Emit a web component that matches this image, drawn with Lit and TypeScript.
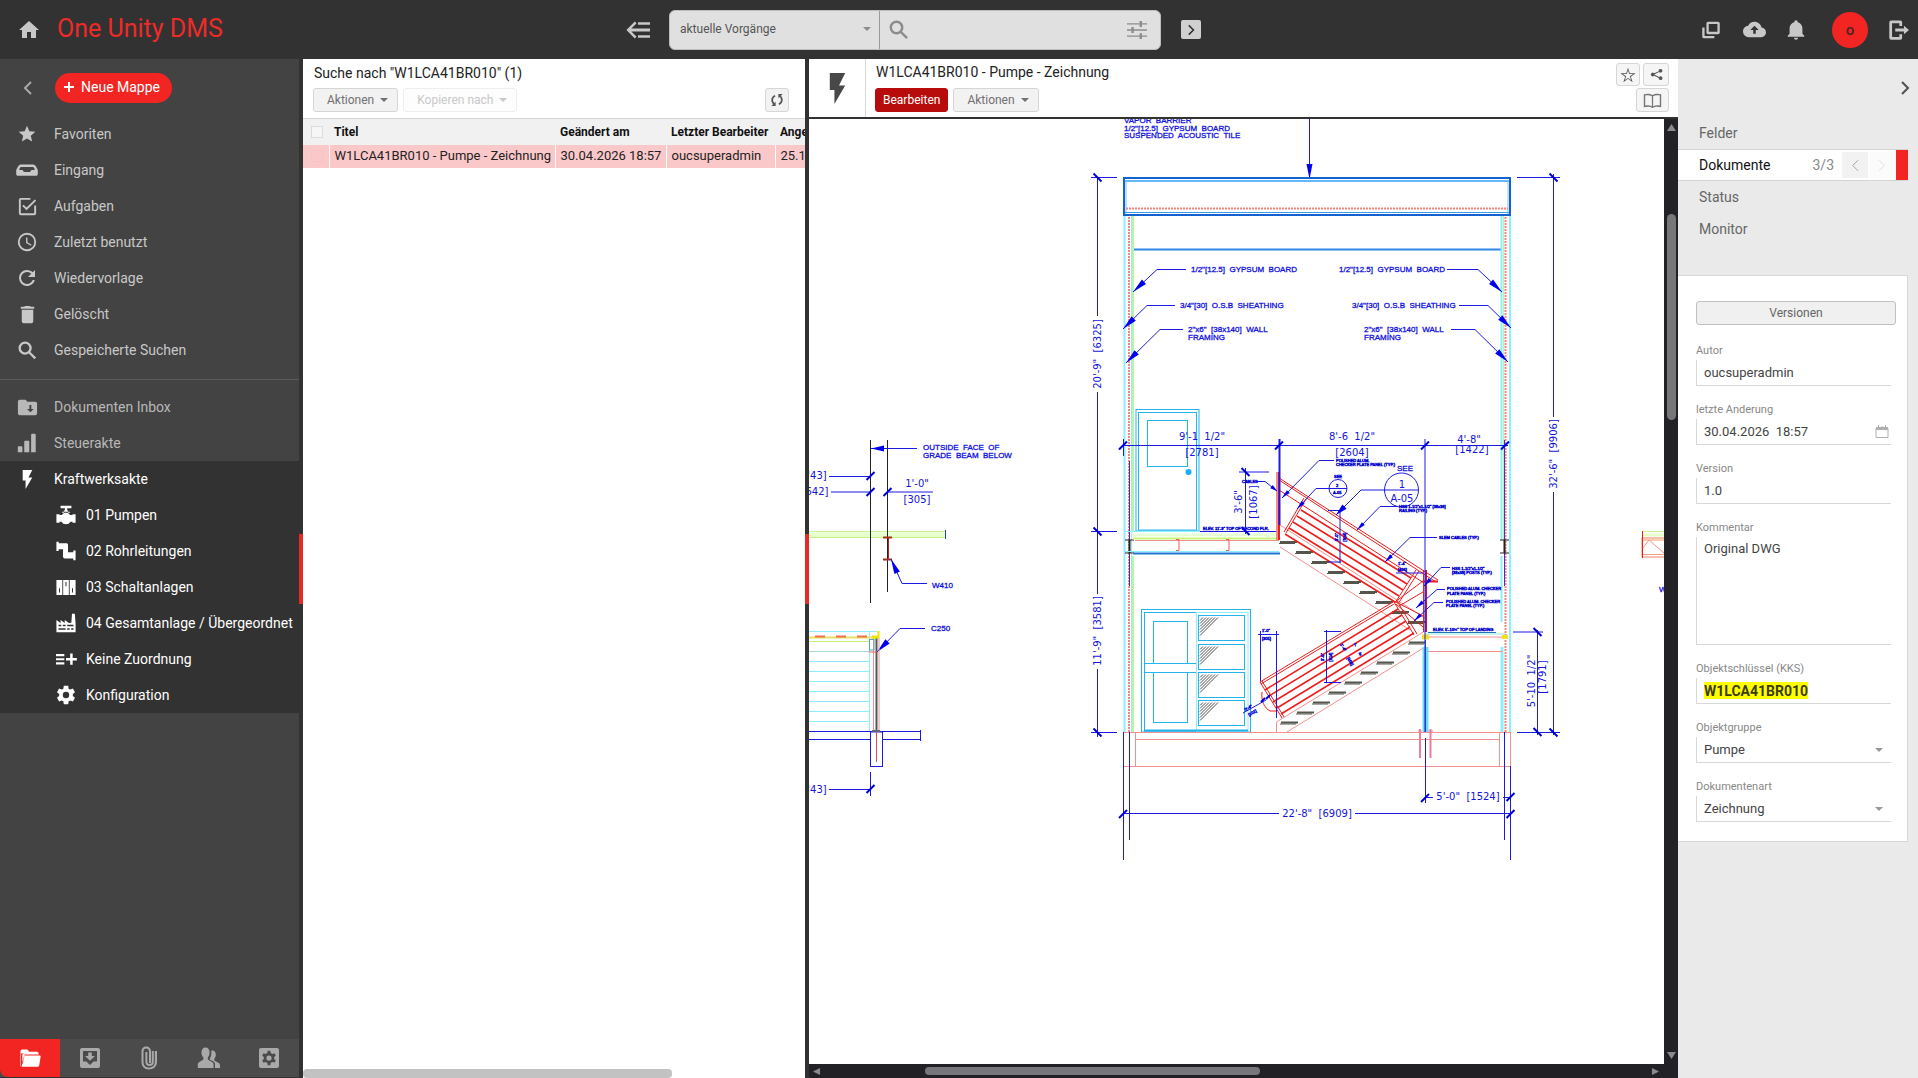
import { LitElement, html, svg, css, nothing } from "lit";
import { customElement } from "lit/decorators.js";

/* ---------- icons (24 x 24 grid) ---------- */
const ICONS: Record<string, string> = {
  home: "M10,20V14H14V20H19V12H22L12,3L2,12H5V20H10Z",
  star: "M12,17.27L18.18,21L16.54,13.97L22,9.24L14.81,8.62L12,2L9.19,8.62L2,9.24L7.45,13.97L5.82,21L12,17.27Z",
  starOutline: "M12,15.9L7.9,18.7L9.5,13.8L5.2,10.8H10.4L12,5.8L13.6,10.8H18.8L14.5,13.8L16.1,18.7L12,15.9M12,2.2L9.6,9.7H1.8L8.2,14.2L5.8,21.6L12,17.1L18.2,21.6L15.8,14.2L22.2,9.7H14.4L12,2.2Z",
  tray: "M6.5,6.5H17.5C19,6.5 20,7 21,8.5L22.8,12V16C22.8,17 22,17.8 21,17.8H3C2,17.8 1.2,17 1.2,16V12L3,8.5C4,7 5,6.5 6.5,6.5M6.4,9C5.6,9 5,9.6 4.6,10.6L4.3,12H7.4C8,12 8.2,14 9.6,14H14.4C15.8,14 16,12 16.6,12H19.7L19.4,10.6C19,9.6 18.4,9 17.6,9H6.4Z",
  task: "M19,19H5V5H15V3H5C3.89,3 3,3.89 3,5V19A2,2 0 0,0 5,21H19A2,2 0 0,0 21,19V11H19M7.91,10.08L6.5,11.5L11,16L21,6L19.59,4.58L11,13.17L7.91,10.08Z",
  clock: "M12,20A8,8 0 0,0 20,12A8,8 0 0,0 12,4A8,8 0 0,0 4,12A8,8 0 0,0 12,20M12,2A10,10 0 0,1 22,12A10,10 0 0,1 12,22C6.47,22 2,17.5 2,12A10,10 0 0,1 12,2M12.5,7V12.25L17,14.92L16.25,16.15L11,13V7H12.5Z",
  refresh: "M17.65,6.35C16.2,4.9 14.21,4 12,4A8,8 0 0,0 4,12A8,8 0 0,0 12,20C15.73,20 18.84,17.45 19.73,14H17.65C16.83,16.33 14.61,18 12,18A6,6 0 0,1 6,12A6,6 0 0,1 12,6C13.66,6 15.14,6.69 16.22,7.78L13,11H20V4L17.65,6.35Z",
  trash: "M19,4H15.5L14.5,3H9.5L8.5,4H5V6H19M6,19A2,2 0 0,0 8,21H16A2,2 0 0,0 18,19V7H6V19Z",
  search: "M9.5,2.6A6.9,6.9 0 0,1 16.4,9.5C16.4,11.1 15.9,12.5 15,13.6L21,19.2L19.2,21L13.4,15.2C12.3,16 11,16.4 9.5,16.4A6.9,6.9 0 0,1 2.6,9.5A6.9,6.9 0 0,1 9.5,2.6M9.5,5C7,5 5,7 5,9.5C5,12 7,14 9.5,14C12,14 14,12 14,9.5C14,7 12,5 9.5,5Z",
  inbox: "M10,4H4C2.89,4 2,4.89 2,6V18A2,2 0 0,0 4,20H20A2,2 0 0,0 22,18V8C22,6.89 21.1,6 20,6H12L10,4M14,9.5H16V13.5H18.5L15,17L11.5,13.5H14V9.5Z",
  bars: "M2,16.5A1,1 0 0,1 3,15.5H6A1,1 0 0,1 7,16.5V22H2V16.5M9,10.5A1,1 0 0,1 10,9.5H13.5A1,1 0 0,1 14.5,10.5V22H9V10.5M16.5,3A1,1 0 0,1 17.5,2H20.5A1,1 0 0,1 21.5,3V22H16.5V3Z",
  flash: "M7,2V13H10V22L17,10H13L17,2H7Z",
  valve: "M5.5,1H18.5V4H13.4V6.5H14.5V9.5L17,12H19.8V11.2H23.5V21.4H19.8V20.2H17.4C16.2,22.2 14.3,23.2 12,23.2C9.7,23.2 7.8,22.2 6.6,20.2H4.2V21.4H0.5V11.2H4.2V12H7L9.5,9.5V6.5H10.6V4H5.5V1M7.4,8H16.6V9.4H7.4Z",
  pipe: "M0.5,1H3.2V2.6H12.2C13.6,2.6 14.4,3.4 14.4,4.8V13.6H20.8V11.4H23.5V23H20.8V20.9H10.6C9.2,20.9 8.4,20.1 8.4,18.7V9.8H3.2V12H0.5V1Z",
  cabinet: "M0.5,3.5H7.6V21.5H0.5V3.5M8.6,3.5H15.4V21.5H8.6V3.5M16.4,3.5H23.5V21.5H16.4V3.5M3.6,13.5V18.5H4.8V13.5H3.6M11.4,6V11H12.6V6H11.4M19.2,13.5V18.5H20.4V13.5H19.2Z",
  factory: "M0.5,8.5L5.5,12V8.5L10.5,12V8.5L15.5,12L18.4,11.6L19.2,1H22.6L23.5,13V23H0.5V8.5M3,14.2V16H6.4V14.2H3M8.2,14.2V16H11.6V14.2H8.2M13.4,14.2V16H21V14.2H13.4M3,18.4V20.2H11.6V18.4H3M13.4,18.4V20.2H16.4V18.4H13.4M18.2,18.4V20.2H21V18.4H18.2Z",
  listPlus: "M0,6H10V8.6H0V6M0,11H10V13.6H0V11M0,16H10V18.6H0V16M17,5.5H20V10.7H25V13.7H20V19H17V13.7H12V10.7H17V5.5Z",
  gear: "M12,15.5A3.5,3.5 0 0,1 8.5,12A3.5,3.5 0 0,1 12,8.5A3.5,3.5 0 0,1 15.5,12A3.5,3.5 0 0,1 12,15.5M19.43,12.97C19.47,12.65 19.5,12.33 19.5,12C19.5,11.67 19.47,11.34 19.43,11L21.54,9.37C21.73,9.22 21.78,8.95 21.66,8.73L19.66,5.27C19.54,5.05 19.27,4.96 19.05,5.05L16.56,6.05C16.04,5.66 15.5,5.32 14.87,5.07L14.5,2.42C14.46,2.18 14.25,2 14,2H10C9.75,2 9.54,2.18 9.5,2.42L9.13,5.07C8.5,5.32 7.96,5.66 7.44,6.05L4.95,5.05C4.73,4.96 4.46,5.05 4.34,5.27L2.34,8.73C2.21,8.95 2.27,9.22 2.46,9.37L4.57,11C4.53,11.34 4.5,11.67 4.5,12C4.5,12.33 4.53,12.65 4.57,12.97L2.46,14.63C2.27,14.78 2.21,15.05 2.34,15.27L4.34,18.73C4.46,18.95 4.73,19.03 4.95,18.95L7.44,17.94C7.96,18.34 8.5,18.68 9.13,18.93L9.5,21.58C9.54,21.82 9.75,22 10,22H14C14.25,22 14.46,21.82 14.5,21.58L14.87,18.93C15.5,18.67 16.04,18.34 16.56,17.94L19.05,18.95C19.27,19.03 19.54,18.95 19.66,18.73L21.66,15.27C21.78,15.05 21.73,14.78 21.54,14.63L19.43,12.97Z",
  collapse: "M8.8,3.4L10.6,5.2L5.4,10.6H24V13.4H5.4L10.6,18.8L8.8,20.6L0.4,12L8.8,3.4M12,4.2H24V6.8H12V4.2M12,17.2H24V19.8H12V17.2Z",
  tune: "M2,5.2H14.6V3H17V5.2H22V6.6H17V9H14.6V6.6H2V5.2M2,11.3H6.4V9H8.8V11.3H22V12.7H8.8V15H6.4V12.7H2V11.3M2,17.4H14.6V15.2H17V17.4H22V18.8H17V21H14.6V18.8H2V17.4Z",
  windows: "M8.5,2H20.5A2,2 0 0,1 22.5,4V15A2,2 0 0,1 20.5,17H8.5A2,2 0 0,1 6.5,15V4A2,2 0 0,1 8.5,2M9.3,4.8V14.2H19.7V4.8H9.3M1.5,9H4.3V19.2H16V22H3.5A2,2 0 0,1 1.5,20V9Z",
  cloud: "M19.35,10.03C18.67,6.59 15.64,4 12,4C9.11,4 6.6,5.64 5.35,8.03C2.34,8.36 0,10.9 0,14A6,6 0 0,0 6,20H19A5,5 0 0,0 24,15C24,12.36 21.95,10.22 19.35,10.03M13.3,12.6V16.4H10.7V12.6H7.6L12,8.2L16.4,12.6H13.3Z",
  bell: "M21,18.2V19.4H3V18.2L5,16.2V10.2C5,7 7.1,4.4 10.1,3.6V3.2A1.9,1.9 0 0,1 13.9,3.2V3.6C16.9,4.4 19,7 19,10.2V16.2L21,18.2M14.2,20.4A2.2,2.2 0 0,1 9.8,20.4",
  exit: "M4.5,1.5H14.5A2,2 0 0,1 16.5,3.5V7.5H13.5V4.5H5.5V19.5H13.5V16.5H16.5V20.5A2,2 0 0,1 14.5,22.5H4.5A2,2 0 0,1 2.5,20.5V3.5A2,2 0 0,1 4.5,1.5M9,10.4H18.5V7.4L24,12L18.5,16.6V13.6H9V10.4Z",
  share: "M18.5,3A3,3 0 1,1 16.2,8L9,11.5V12.5L16.2,16A3,3 0 1,1 15.6,17.4L8.2,13.9A3,3 0 1,1 8.2,10.1L15.6,6.6A3,3 0 0,1 18.5,3Z",
  book: "M1,4C5,3 9,3 12,5.2C15,3 19,3 23,4V20.5C19,19.5 15,19.5 12,21.5C9,19.5 5,19.5 1,20.5V4M2.8,5.6V18.4C6,17.8 8.6,17.9 11.2,19.2V6.6C8.6,5 6,5 2.8,5.6M21.2,5.6C18,5 15.4,5 12.8,6.6V19.2C15.4,17.9 18,17.8 21.2,18.4V5.6Z",
  sync: "M9,5.4L10,7.4C8,8.2 6.8,10 6.8,12C6.8,13.6 7.4,14.9 8.6,15.9L10.2,14.3V20H4.4L6.8,17.7C5.3,16.2 4.4,14.2 4.4,12C4.4,9 6.3,6.4 9,5.4M15,18.6L14,16.6C16,15.8 17.2,14 17.2,12C17.2,10.4 16.6,9.1 15.4,8.1L13.8,9.7V4H19.6L17.2,6.3C18.7,7.8 19.6,9.8 19.6,12C19.6,15 17.7,17.6 15,18.6Z",
  folder: "M4,3.5H9.5L11.3,5.8H19A1.6,1.6 0 0,1 20.6,7.4V8.6H6.6L4.6,18.5L4.2,10C4.2,8.2 4.8,7.4 6.4,7.4H3V19.5A1,1 0 0,0 3.4,20.4L2.5,20.2V5A1.5,1.5 0 0,1 4,3.5M7.6,9.6H21.6A1,1 0 0,1 22.6,10.8L21.2,19.4A1.6,1.6 0 0,1 19.6,20.8H3.6L5.8,10.8C6,10 6.6,9.6 7.6,9.6Z",
  boxDown: "M4,2H20A2,2 0 0,1 22,4V20A2,2 0 0,1 20,22H4A2,2 0 0,1 2,20V4A2,2 0 0,1 4,2M5,5V15.5H8.4L12,19L15.6,15.5H19V5H5M10.2,6.5H13.8V10H17L12,14.8L7,10H10.2V6.5Z",
  clip: "M12,23.5C7.5,23.5 4.5,20.5 4.5,16V5.5C4.5,2.5 6.5,0.5 9.2,0.5C12,0.5 14,2.5 14,5.5V17H12V5.6C12,3.6 10.8,2.5 9.2,2.5C7.6,2.5 6.5,3.6 6.5,5.6V16C6.5,19.4 8.6,21.5 12,21.5C15.4,21.5 17.8,19.4 17.8,16V5H20V16C20,20.5 16.5,23.5 12,23.5M12.6,20C10,20 8.4,18.4 8.4,16V6H10.4V16C10.4,17.3 11.4,18 12.6,18C13.8,18 14.8,17.3 14.8,16V5H16.8V16C16.8,18.4 15.2,20 12.6,20Z",
  people: "M8.5,1.5C11.2,1.5 12.6,3.6 12.6,6.4C12.6,8.6 11.9,10.3 10.8,11.4V13.6L15.4,16.2C16.2,16.8 16.6,17.6 16.6,18.8V22H0.8V18.8C0.8,17.6 1.2,16.8 2,16.2L6.4,13.6V11.4C5.2,10.3 4.5,8.6 4.5,6.4C4.5,3.6 5.8,1.5 8.5,1.5M15.2,4.5C17.6,4.5 18.8,6.2 18.8,8.6C18.8,10.4 18.2,11.8 17.3,12.7V14.6L21.8,17C22.6,17.5 23,18.3 23,19.4V22H18V18.6C18,17 17.3,15.9 16,15.2L12.8,13.4V12.2C13.8,11 14.4,9.4 14.4,6.4C14.4,5.7 14.3,5.1 14.1,4.6Z",
  boxGear:
    "M4,2H20A2,2 0 0,1 22,4V20A2,2 0 0,1 20,22H4A2,2 0 0,1 2,20V4A2,2 0 0,1 4,2M10.7,4.8L10.3,6.9L8.6,7.9L6.6,7.2L5.2,9.5L6.8,10.9V13.1L5.2,14.5L6.6,16.8L8.6,16.1L10.3,17.1L10.7,19.2H13.3L13.7,17.1L15.4,16.1L17.4,16.8L18.8,14.5L17.2,13.1V10.9L18.8,9.5L17.4,7.2L15.4,7.9L13.7,6.9L13.3,4.8H10.7M12,9.4A2.6,2.6 0 1,1 12,14.6A2.6,2.6 0 1,1 12,9.4Z",
};

const icon = (name: string, size = 24) => html`<svg
  class="icon" width=${size} height=${size} viewBox="0 0 24 24" fill="currentColor" aria-hidden="true"
><path fill-rule="evenodd" d=${ICONS[name]}></path></svg>`;

const chevron = (dir: "left" | "right", w = 9, stroke = 2) => html`<svg
  class="icon" width=${w} height=${w + 5} viewBox="0 0 9 14" fill="none" stroke="currentColor" stroke-width=${stroke} aria-hidden="true"
><path d=${dir === "left" ? "M8,1L2,7L8,13" : "M1,1L7,7L1,13"}></path></svg>`;

const reset = css`
  :host, *, *::before, *::after { box-sizing: border-box; }
  button, input, select, textarea { font: inherit; color: inherit; margin: 0; padding: 0; border: 0; background: none; outline: 0; }
  button { display: flex; align-items: center; justify-content: center; cursor: pointer; }
  a { color: inherit; text-decoration: none; }
  h1, h2, ul { margin: 0; padding: 0; font-size: inherit; font-weight: 400; }
  ul { list-style: none; }
  .icon { display: block; flex: none; overflow: visible; }
  .caret { width: 0; height: 0; border: 4px solid transparent; border-top-color: currentColor; border-bottom: 0; }
`;

/* ---------- technical drawing ---------- */
type Pt = [number, number];
const B = "#1c1ce0";

const ln = (x1: number, y1: number, x2: number, y2: number, c = B, w = 1) =>
  svg`<line x1=${x1} y1=${y1} x2=${x2} y2=${y2} stroke=${c} stroke-width=${w}></line>`;
const dots = (x1: number, y1: number, x2: number, y2: number) =>
  svg`<line x1=${x1} y1=${y1} x2=${x2} y2=${y2} stroke="#f4857c" stroke-width="2" stroke-dasharray="2 1"></line>`;
const box = (x1: number, y1: number, x2: number, y2: number, c: string, w = 1) =>
  svg`<rect x=${x1} y=${y1} width=${x2 - x1} height=${y2 - y1} fill="none" stroke=${c} stroke-width=${w}></rect>`;
const leader = (pts: Pt[], len = 15, half = 3) => {
  const [px, py] = pts[pts.length - 2];
  const [x, y] = pts[pts.length - 1];
  const d = Math.hypot(x - px, y - py);
  const ux = (x - px) / d;
  const uy = (y - py) / d;
  const bx = x - ux * len;
  const by = y - uy * len;
  const head = `${x},${y} ${bx - uy * half},${by + ux * half} ${bx + uy * half},${by - ux * half}`;
  return svg`<polyline points=${pts.map((p) => p.join(",")).join(" ")} fill="none" stroke=${B}></polyline>
    <polygon points=${head} fill="#0000f0"></polygon>`;
};
const tickH = (x: number, y: number, r = 4) => ln(x - r, y + r, x + r, y - r, "#0000d8", 2);
const tickV = (x: number, y: number, r = 4) => ln(x - r, y - r, x + r, y + r, "#0000d8", 2);
const note = (x: number, y: number, s: string) => svg`<text class="note" x=${x} y=${y}>${s}</text>`;
const tiny = (x: number, y: number, s: string) => svg`<text class="tiny" x=${x} y=${y}>${s}</text>`;
const dim = (x: number, y: number, s: string) => svg`<text class="dim" x=${x} y=${y} text-anchor="middle">${s}</text>`;
const dimV = (x: number, y: number, s: string) =>
  svg`<text class="dim" text-anchor="middle" transform=${`translate(${x} ${y}) rotate(-90)`}>${s}</text>`;
const tinyV = (x: number, y: number, s: string, a = -90) =>
  svg`<text class="tiny" text-anchor="middle" transform=${`translate(${x} ${y}) rotate(${a})`}>${s}</text>`;
const range = (n: number) => Array.from({ length: n }, (_, i) => i);

const CY = "#8ceeff";
const GR = "#b8f5a8";
const SKY = "#22b4ea";
const SAL = "#f59090";
const RED = "#ee1c1c";
const TREAD = "#55554c";

@customElement("cad-drawing")
export class CadDrawing extends LitElement {
  static styles = css`
    :host { display: block; min-width: 0; min-height: 0; background: #fff; overflow: hidden; }
    .sheet { display: block; width: 100%; height: 100%; }
    .note { font: 8px "Liberation Sans", sans-serif; fill: #1010e0; stroke: #1010e0; stroke-width: 0.3; white-space: pre; }
    .dim { font: 10px "DejaVu Sans", sans-serif; fill: #1414dc; white-space: pre; }
    .tiny { font: 4px "Liberation Sans", sans-serif; fill: #0000d0; stroke: #0000d0; stroke-width: 0.5; }
  `;

  private roof() {
    return svg`
      ${note(1124, 123, "VAPOR  BARRIER")}${note(1124, 131, '1/2"[12.5]  GYPSUM  BOARD')}${note(1124, 138, "SUSPENDED  ACOUSTIC  TILE")}
      ${leader([[1309.5, 112], [1309.5, 179]])}
      ${box(1124, 178, 1510, 215, "#1262d0", 2)}${ln(1125, 181, 1509, 181, "#62b8f8", 2)}
      ${ln(1126, 180, 1126, 214, "#7cc4ff")}${ln(1508, 180, 1508, 214, "#7cc4ff")}
      ${dots(1126, 208.5, 1508, 208.5)}${ln(1125, 212.5, 1509, 212.5, "#3aa0e8")}
      ${ln(1133, 249.5, 1501, 249.5, "#2f86ea", 2)}`;
  }

  private walls() {
    return svg`
      ${ln(1124.5, 216, 1124.5, 732, CY, 2)}${ln(1133, 216, 1133, 531, GR, 2)}${ln(1131.5, 216, 1131.5, 732, CY)}${ln(1133, 556, 1133, 732, GR, 2)}
      ${dots(1129, 217, 1129, 732)}
      ${ln(1501.5, 216, 1501.5, 540, CY, 2)}${ln(1510, 216, 1510, 732, CY, 2)}${ln(1503.5, 216, 1503.5, 540, GR)}
      ${dots(1505.5, 217, 1505.5, 732)}${ln(1501.5, 556, 1501.5, 622, CY, 2)}${ln(1502, 647, 1502, 732, CY, 3)}
      ${ln(1129.5, 461, 1129.5, 586, "#5a20c0")}${ln(1504.5, 440, 1504.5, 586, "#5a20c0")}
      ${ln(1129.5, 540, 1129.5, 553, "#222", 2)}${ln(1125, 540, 1134, 540, "#222")}${ln(1125, 553, 1134, 553, "#222")}
      ${ln(1504.5, 540, 1504.5, 553, "#222", 2)}${ln(1500, 540, 1509, 540, "#222")}${ln(1500, 553, 1509, 553, "#222")}
      ${leader([[1186, 269.5], [1157, 269.5], [1133, 292]])}${note(1191, 272, '1/2"[12.5]  GYPSUM  BOARD')}
      ${leader([[1175, 305.5], [1147, 305.5], [1123, 329]])}${note(1180, 308, '3/4"[30]  O.S.B  SHEATHING')}
      ${leader([[1183, 329.5], [1160, 329.5], [1126, 363]])}${note(1188, 332, '2"x6"  [38x140]  WALL')}${note(1188, 340, "FRAMING")}
      ${leader([[1447, 269.5], [1478, 269.5], [1502, 292]])}${note(1339, 272, '1/2"[12.5]  GYPSUM  BOARD')}
      ${leader([[1459, 305.5], [1488, 305.5], [1511, 328]])}${note(1352, 308, '3/4"[30]  O.S.B  SHEATHING')}
      ${leader([[1451, 329.5], [1475, 329.5], [1508, 362]])}${note(1364, 332, '2"x6"  [38x140]  WALL')}${note(1364, 340, "FRAMING")}`;
  }

  private dimensions() {
    return svg`
      ${ln(1097.5, 177, 1097.5, 316)}${dimV(1101, 354, "20'-9\"  [6325]")}${ln(1097.5, 392, 1097.5, 594)}
      ${dimV(1101, 631, "11'-9\"  [3581]")}${ln(1097.5, 669, 1097.5, 737)}
      ${[177.5, 531.5, 732.5].map((y) => svg`${ln(1091, y, 1117, y)}${tickV(1097.5, y)}`)}
      ${ln(1553.5, 174, 1553.5, 417)}${dimV(1557, 454, "32'-6\"  [9906]")}${ln(1553.5, 492, 1553.5, 735)}
      ${[177.5, 732.5].map((y) => svg`${ln(1517, y, 1560, y)}${tickV(1553.5, y)}`)}
      ${ln(1513, 632, 1543, 632)}${ln(1537.5, 630, 1537.5, 735)}${tickV(1537.5, 632)}${tickV(1537.5, 732)}
      ${dimV(1535, 681, "5'-10  1/2\"")}${dimV(1546, 677, "[1791]")}
      ${ln(1122, 445.5, 1508, 445.5)}${ln(1123.5, 439, 1123.5, 456)}${ln(1279.5, 439, 1279.5, 525, B, 2)}
      ${ln(1425, 439, 1425, 732, B, 1)}${[1123, 1279, 1425, 1505].map((x) => tickH(x, 445.5))}
      ${dim(1202, 440, "9'-1  1/2\"")}${dim(1202, 456, "[2781]")}${dim(1352, 440, "8'-6  1/2\"")}${dim(1352, 456, "[2604]")}
      ${dim(1469, 443, "4'-8\"")}${dim(1472, 453, "[1422]")}
      ${ln(1245.5, 468, 1245.5, 534)}${ln(1239, 472, 1269, 472)}${tickV(1245.5, 472)}${tickV(1245.5, 531)}
      ${dimV(1242, 502, "3'-6\"")}${dimV(1257, 502, "[1067]")}
      ${ln(1123.5, 732, 1123.5, 860, B, 1)}${ln(1129.5, 732, 1129.5, 840)}${ln(1504.5, 732, 1504.5, 840)}${ln(1510.5, 766, 1510.5, 860)}
      ${ln(1123, 813.5, 1279, 813.5)}${dim(1317, 817, "22'-8\"  [6909]")}${ln(1355, 813.5, 1511, 813.5)}${tickH(1123, 814)}${tickH(1510.5, 814)}
      ${ln(1425.5, 738, 1425.5, 803)}${ln(1425, 797.5, 1433, 797.5)}${dim(1468, 800, "5'-0\"  [1524]")}${ln(1503, 797.5, 1511, 797.5)}
      ${tickH(1425, 798)}${tickH(1510.5, 797)}`;
  }

  private upperFloor() {
    return svg`
      ${box(1136, 409.5, 1199, 531, SKY)}${box(1138.5, 412.5, 1196.5, 530, SKY)}${box(1147.5, 420.5, 1187.5, 466.5, SKY)}
      <circle cx="1188.5" cy="472" r="3" fill="#16b0f4"></circle>
      ${ln(1125, 531.5, 1277, 531.5, CY)}${ln(1133, 535, 1277, 535, "#e6ffd4", 3)}${ln(1133, 538.5, 1277, 538.5, "#c8f77a", 2)}
      ${ln(1135, 540.5, 1279, 540.5, SAL)}${ln(1133, 553.5, 1280, 553.5, "#1f74d8", 2)}${ln(1125, 551.5, 1279, 551.5, CY)}
      ${[1176, 1226].map((x) => svg`<path d=${`M${x},539.5h3v11h-3`} fill="none" stroke="#f05858"></path>`)}
      ${ln(1200, 531.5, 1276, 531.5)}${tiny(1203, 530, "ELEV. 11'-9\" TOP OF SECOND FLR.")}`;
  }

  private cabinet() {
    return svg`
      ${box(1141.5, 609.5, 1250.5, 732, SKY)}${box(1144.5, 612.5, 1196.5, 732, SKY)}${box(1196.5, 612.5, 1248, 732, CY)}
      ${box(1153.5, 621.5, 1187.5, 663.5, SKY)}${ln(1144, 663.5, 1196, 663.5, SKY)}${ln(1144, 672.5, 1196, 672.5, SKY)}
      ${box(1153.5, 672.5, 1187.5, 722.5, SKY)}${ln(1145, 730.5, 1248, 730.5, SKY, 2)}
      ${[615.5, 644.5, 672.5, 700.5].map(
        (y) => svg`${box(1198.5, y, 1244.5, y + 25, SKY)}${range(6).map((i) => {
          const k = 3 + i * 3;
          return ln(1200, y + 2 + k, 1200 + k, y + 2, "#222", 0.8);
        })}`
      )}`;
  }

  private stairs() {
    return svg`
      ${ln(1280, 525, 1425, 618, SAL)}${ln(1280, 547, 1410, 630, SAL)}
      ${ln(1276.5, 722, 1425, 631, SAL)}${ln(1287, 732, 1425, 647, SAL)}${ln(1276.5, 722, 1276.5, 732, SAL)}
      ${range(9).map((i) => svg`${ln(1280 + i * 16, 542 + i * 10, 1297 + i * 16, 542 + i * 10, TREAD, 2)}${ln(1279 + i * 16, 543.5 + i * 10, 1295 + i * 16, 543.5 + i * 10, TREAD)}`)}
      ${range(9).map((i) => svg`${ln(1281 + i * 16, 722.5 - i * 10, 1298 + i * 16, 722.5 - i * 10, TREAD, 2)}${ln(1280 + i * 16, 724 - i * 10, 1296 + i * 16, 724 - i * 10, TREAD)}`)}
      ${ln(1277, 472, 1277, 540, RED)}${ln(1279, 472, 1279, 540, RED, 2)}
      ${ln(1279, 478, 1438, 580, RED)}${ln(1279, 480, 1436, 582, RED, 1)}${ln(1279, 490, 1424, 583, RED, 1)}
      ${ln(1423, 581.5, 1438, 581.5, RED, 2)}
      ${range(5).map((i) => ln(1301 - i * 4, 510 + i * 6, 1411 - i * 4, 578 + i * 6, RED, 1.5))}
      ${ln(1284, 532, 1304, 498, RED)}${ln(1286, 533, 1306, 499, RED)}${ln(1416, 570, 1395, 603, RED)}${ln(1419, 571, 1398, 604, RED)}
      ${ln(1395, 602, 1423, 581, RED)}${ln(1399, 606, 1423, 592, RED)}${ln(1396, 602, 1423, 616, RED)}${ln(1396, 604, 1423, 627, RED)}
      ${ln(1423.5, 570, 1423.5, 632, RED)}${ln(1426, 570, 1426, 632, "#b01850", 2)}
      ${ln(1260, 682, 1393, 602, RED)}${ln(1261, 684, 1394, 604, RED)}
      ${range(5).map((i) => ln(1265 + i * 4, 690 + i * 6, 1398 + i * 4, 609 + i * 6, RED, 1.5))}
      ${ln(1260, 682, 1282, 718, RED)}${ln(1262, 681, 1284, 717, RED)}${ln(1394, 602, 1414, 635, RED)}${ln(1397, 601, 1417, 634, RED)}
      <path d="M1262,692c-1,8 2,16 8,19h6" fill="none" stroke=${RED}></path>
      ${ln(1428, 632.5, 1496, 632.5, "#1f74b8")}${ln(1425, 634, 1505, 634, "#8fe8e8")}${ln(1425, 637, 1507, 637, SAL)}${ln(1428, 651.5, 1503, 651.5, SAL)}
      ${ln(1422, 637, 1429, 637, "#f0e020", 5)}${ln(1502, 637, 1508, 637, "#f0e020", 4)}
      ${ln(1425.5, 647, 1425.5, 732, "#6fdcf4", 6)}${ln(1425.5, 640, 1425.5, 732, "#2060c8")}
      ${tiny(1433, 631, "ELEV. 5'-10½\" TOP OF LANDING")}
      ${ln(1260.5, 631, 1260.5, 681)}${ln(1276.5, 631, 1276.5, 718)}${ln(1258, 634.5, 1279, 634.5)}${tiny(1262, 632, "1'-0\"")}${tiny(1262, 640, "[305]")}
      ${ln(1326.5, 630, 1326.5, 683)}${ln(1324, 631.5, 1341, 631.5)}${ln(1324, 682.5, 1341, 682.5)}${tinyV(1324, 657, "3'-0\"")}${tinyV(1332, 657, "[914]")}
      ${ln(1340, 510, 1340, 563)}${ln(1328, 510.5, 1343, 510.5)}${ln(1328, 562, 1341, 562)}${tinyV(1338, 537, "3'-0\"")}${tinyV(1346, 537, "[914]")}
      ${tinyV(1342, 648, "1'-4\"", 60)}${tinyV(1349, 662, "[406]", 60)}${tinyV(1356, 646, "7'", -30)}${tinyV(1361, 655, "8'", -30)}
      ${tiny(1398, 565, "1'-4\"")}${tiny(1398, 571, "[406]")}${ln(1396, 573, 1423, 573)}
      ${tinyV(1249, 709, "0'-4\"", -30)}${tinyV(1253, 714, "[102]", -30)}${ln(1243, 713, 1266, 700)}${tickH(1268, 697, 2)}${tickH(1263, 700, 2)}`;
  }

  private callouts() {
    return svg`
      ${leader([[1334, 460.5], [1319, 460.5], [1282, 498]], 9, 2)}${tiny(1336, 462, "POLISHED ALUM.")}${tiny(1336, 466, "CHECKER PLATE PANEL (TYP.)")}
      ${tiny(1242, 483, "CABLES")}${leader([[1257, 481.5], [1265, 481.5], [1277, 491]], 7, 2)}
      ${leader([[1329, 488.5], [1316, 488.5], [1297, 509]], 9, 2)}
      <circle cx="1338" cy="488.5" r="9" fill="none" stroke=${B}></circle>${ln(1329, 488.5, 1347, 488.5)}
      ${tiny(1334, 478, "SEE")}${tiny(1336, 487, "2")}${tiny(1333, 494, "A-05")}
      ${leader([[1384, 490], [1361, 490], [1336, 515]], 12, 3)}
      <circle cx="1401.5" cy="490" r="17" fill="none" stroke=${B}></circle>${ln(1384, 490, 1419, 490)}
      ${note(1397, 471, "SEE")}${dim(1402, 488, "1")}${dim(1402, 502, "A-05")}
      ${leader([[1398, 506.5], [1380, 506.5], [1357, 530]], 9, 2)}${tiny(1399, 508, "HSS 1-1/2\"x1-1/2\" [38x38]")}${tiny(1399, 512, "RAILING (TYP.)")}
      ${leader([[1437, 537.5], [1410, 537.5], [1385, 562]], 9, 2)}${tiny(1439, 539, "SLEM CABLES (TYP.)")}
      ${leader([[1450, 567.5], [1441, 567.5], [1424, 586]], 9, 2)}${tiny(1452, 570, "HSS 1-1/2\"x1-1/2\"")}${tiny(1452, 574, "[38x38] POSTS (TYP.)")}
      ${leader([[1445, 589.5], [1437, 589.5], [1416, 608]], 9, 2)}${tiny(1447, 590, "POLISHED ALUM. CHECKER")}${tiny(1447, 595, "PLATE PANEL (TYP.)")}
      ${leader([[1443, 602.5], [1434, 602.5], [1414, 621]], 9, 2)}${tiny(1446, 603, "POLISHED ALUM. CHECKER")}${tiny(1446, 607, "PLATE PANEL (TYP.)")}`;
  }

  private foundation() {
    return svg`
      ${box(1123.5, 732.5, 1510.5, 766.5, SAL)}${ln(1135, 739.5, 1499, 739.5, SAL)}${ln(1135.5, 732, 1135.5, 766, SAL)}${ln(1499.5, 732, 1499.5, 766, SAL)}
      ${ln(1420, 729, 1420, 758, "#e87ea0", 2)}${ln(1430.5, 729, 1430.5, 758, "#e87ea0", 2)}${ln(1418, 731, 1422, 731, "#e87ea0")}${ln(1428, 731, 1433, 731, "#e87ea0")}`;
  }

  private leftDetail() {
    return svg`
      ${ln(809, 535, 946, 535, "#e6ffcc", 5)}${ln(809, 531.5, 946, 531.5, "#c6f58a")}${ln(809, 537.5, 946, 537.5, "#c6f58a")}${ln(945.5, 530, 945.5, 539, "#2848a0")}
      ${ln(870.5, 440, 870.5, 603, "#222")}${ln(887.5, 440, 887.5, 592, "#222")}
      ${leader([[917, 448.5], [871, 448.5]], 13, 3)}${note(923, 450, "OUTSIDE  FACE  OF")}${note(923, 458, "GRADE  BEAM  BELOW")}
      ${dim(817, 479, "'43]")}${ln(829, 476.5, 870, 476.5)}${tickH(870.5, 476)}
      ${dim(817, 495, "642]")}${ln(831, 492, 870, 492)}${tickH(870.5, 492)}${tickH(887.5, 492)}${ln(887, 492, 933, 492)}
      ${dim(917, 487, "1'-0\"")}${dim(917, 503, "[305]")}
      ${ln(883, 537.5, 892, 537.5, "#a03018", 2)}${ln(883, 559.5, 892, 559.5, "#a03018", 2)}${ln(888.5, 538, 888.5, 560, "#a03018")}
      ${leader([[927, 583.5], [902, 583.5], [891, 559]])}${note(932, 588, "W410")}
      ${leader([[925, 628.5], [900, 628.5], [877, 652]])}${note(931, 631, "C250")}
      ${ln(809, 631.5, 877, 631.5, CY)}${ln(869.5, 632, 869.5, 731, CY)}
      ${ln(809, 637.5, 876, 637.5, "#e8e060", 2)}${[815, 836, 857].map((x) => ln(x, 636.5, x + 10, 636.5, "#f07050", 2))}
      ${ln(809, 641.5, 869, 641.5, "#c6ee7a")}${ln(809, 651.5, 869, 651.5, "#a8d8d8")}
      ${[661.5, 671.5, 681.5, 691.5, 701.5, 711.5, 721.5].map((y) => ln(809, y, 869, y, CY))}
      ${ln(873.5, 638, 873.5, 731, SAL)}${ln(876.5, 638, 876.5, 731, "#555", 2)}${ln(879, 638, 879, 731, "#d99")}
      ${box(869.5, 639.5, 874, 650, "#50a8b0")}${ln(869, 652, 877, 652, "#e86060")}
      ${ln(872, 637, 879, 637, "#f0e400", 3)}${ln(878.5, 631, 878.5, 638, "#f0e400", 2)}
      ${ln(809, 731.5, 921, 731.5)}${ln(809, 739.5, 921, 739.5)}${ln(920.5, 730, 920.5, 741)}
      <rect x="870.5" y="732" width="12" height="34.5" fill="#fff" stroke=${B}></rect>
      ${ln(876.5, 732, 876.5, 762, "#d05060")}${ln(872, 731, 880, 731, "#667", 2)}
      ${ln(870.5, 772, 870.5, 796)}${dim(817, 793, "'43]")}${ln(829, 789.5, 870, 789.5)}${tickH(870.5, 789)}
      ${ln(1642, 531.5, 1664, 531.5, "#c6f58a")}${ln(1642, 535, 1664, 535, "#e6ffcc", 3)}
      ${box(1642, 538, 1670, 557, "#f08060")}${ln(1642, 540, 1664, 540, "#f0a060")}${ln(1642, 554.5, 1664, 554.5, "#f0a080")}
      ${ln(1642.5, 531, 1642.5, 558, RED)}${ln(1643, 548, 1649, 540, SAL)}${ln(1649, 540, 1664, 553, SAL)}
      ${note(1659, 592, "W")}`;
  }

  render() {
    return html`<svg class="sheet" viewBox="809 119 855 945" preserveAspectRatio="xMidYMid slice" role="img" aria-label="W1LCA41BR010">
      ${this.roof()}${this.walls()}${this.upperFloor()}${this.cabinet()}${this.foundation()}${this.stairs()}${this.dimensions()}${this.callouts()}${this.leftDetail()}
    </svg>`;
  }
}

/* ---------- sidebar ---------- */
type NavItem = [string, string, number];
const MAIN_NAV: NavItem[] = [
  ["star", "Favoriten", 20],
  ["tray", "Eingang", 24],
  ["task", "Aufgaben", 23],
  ["clock", "Zuletzt benutzt", 22],
  ["refresh", "Wiedervorlage", 24],
  ["trash", "Gelöscht", 23],
  ["search", "Gespeicherte Suchen", 23],
];
const FOLDERS: NavItem[] = [
  ["inbox", "Dokumenten Inbox", 23],
  ["bars", "Steuerakte", 22],
];
const PLANT: NavItem[] = [
  ["valve", "01 Pumpen", 20],
  ["pipe", "02 Rohrleitungen", 20],
  ["cabinet", "03 Schaltanlagen", 20],
  ["factory", "04 Gesamtanlage / Übergeordnet", 20],
  ["listPlus", "Keine Zuordnung", 20],
  ["gear", "Konfiguration", 22],
];
const AREAS: [string, string][] = [
  ["folder", "Mappen"],
  ["boxDown", "Ablage"],
  ["clip", "Anhänge"],
  ["people", "Benutzer"],
  ["boxGear", "Einstellungen"],
];

@customElement("dms-sidebar")
export class DmsSidebar extends LitElement {
  static styles = [reset, css`
    :host { display: flex; flex-direction: column; min-height: 0; background: #434343; color: #c8c8c8; }
    .top { display: flex; align-items: center; height: 57px; padding-left: 18px; }
    .back { width: 18px; height: 28px; color: #a8a8a8; }
    .new { height: 30px; margin-left: 19px; padding: 0 12px 2px 9px; gap: 7px; border-radius: 15px; background: #f22522; color: #fff; }
    .row { display: flex; align-items: center; height: 36px; white-space: nowrap; }
    .row .pic { display: flex; flex: none; justify-content: center; width: 54px; }
    .folders { margin-top: 11px; padding-top: 9px; border-top: 1px solid #5c5c5c; color: #b8b8b8; }
    .plant { background: #323232; color: #fff; }
    .plant .sub .pic { width: 32px; margin-left: 50px; margin-right: 4px; }
    .grow { flex: 1; }
    .tabs { display: flex; height: 39px; border-bottom: 1px solid #323232; background: #4b4b4b; color: #a9a9a9; }
    .tab { width: 60px; }
    .tab.on { background: #f22522; color: #fff; border-bottom-left-radius: 8px; }
  `];

  private row([ic, label, size]: NavItem, sub = false) {
    return html`<li><a class="row ${sub ? "sub" : ""}" href="#"><span class="pic">${icon(ic, size)}</span>${label}</a></li>`;
  }

  render() {
    return html`
      <div class="top">
        <button class="back" aria-label="Zurück">${chevron("left")}</button>
        <button class="new"><svg class="icon" width="10" height="10" viewBox="0 0 10 10" stroke="#fff" stroke-width="2"><path d="M5,0V10M0,5H10"></path></svg>Neue Mappe</button>
      </div>
      <ul>${MAIN_NAV.map((r) => this.row(r))}</ul>
      <ul class="folders">${FOLDERS.map((r) => this.row(r))}</ul>
      <ul class="plant">${this.row(["flash", "Kraftwerksakte", 23])}${PLANT.map((r) => this.row(r, true))}</ul>
      <div class="grow"></div>
      <nav class="tabs">
        ${AREAS.map(([n, label], i) => html`<button class="tab ${i === 0 ? "on" : ""}" aria-label=${label}>${icon(n, 24)}</button>`)}
      </nav>`;
  }
}

/* ---------- detail panel ---------- */
@customElement("dms-details")
export class DmsDetails extends LitElement {
  static styles = [reset, css`
    :host { display: block; background: #eaeaea; color: #666; padding-right: 10px; overflow: hidden; }
    .fold { width: 18px; height: 28px; margin: 15px -6px 15px auto; color: #505050; }
    .tab { display: flex; align-items: center; height: 32px; padding-left: 21px; border: 1px solid transparent; border-width: 1px 0; }
    .tab.on { background: #fff; border-color: #d4d4d4; color: #111; }
    .count { margin-left: auto; margin-right: 8px; color: #8a8a8a; }
    .step { width: 26px; height: 26px; margin-right: 1px; background: #f2f2f2; color: #999; }
    .step[disabled] { background: #fbfbfb; color: #ddd; }
    .mark { width: 12px; height: 30px; background: #f22522; }
    .card { margin-top: 30px; padding: 25px 11px 19px 18px; background: #fff; border: 1px solid #d8d8d8; border-left: 0; }
    .versions { width: 100%; height: 24px; border: 1px solid #c0c0c0; border-radius: 3px; background: #f0f0f0; font-size: 12px; color: #666; }
    .fields { display: flex; flex-direction: column; gap: 16px; padding: 18px 5px 0 0; }
    .field { display: flex; flex-direction: column; }
    .label { height: 17px; line-height: 16px; font-size: 11px; color: #888; }
    .control { display: flex; align-items: center; height: 26px; padding-left: 7px; border: 1px solid #d8d8d8; border-width: 0 0 1px 1px; font-size: 13px; color: #444; }
    .control input, .control select { flex: 1; width: 0; min-width: 0; height: 25px; appearance: none; }
    .control.area { height: 108px; }
    .control textarea { width: 100%; height: 100%; padding-top: 4px; resize: none; line-height: 16px; }
    .control .hit { flex: none; width: auto; height: 17px; field-sizing: content; background: #ff0; font-weight: 700; font-size: 14px; color: #3c3c10; }
    .control .caret { margin-right: 8px; color: #999; }
    .cal { margin-right: 2px; color: #b0b0b0; }
  `];

  private text(id: string, label: string, value: string, extra: unknown = nothing) {
    return html`<div class="field"><label class="label" for=${id}>${label}</label>
      <div class="control"><input id=${id} .value=${value}>${extra}</div></div>`;
  }
  private select(id: string, label: string, value: string) {
    return html`<div class="field"><label class="label" for=${id}>${label}</label>
      <div class="control"><select id=${id}><option>${value}</option></select><span class="caret"></span></div></div>`;
  }

  render() {
    const cal = html`<svg class="icon cal" width="14" height="14" viewBox="0 0 14 14" fill="none" stroke="currentColor"><path d="M1,3.5H13V12.5H1Z"></path><path d="M1,3.5H13" stroke-width="3"></path><path d="M3.5,0V3M7,1V3M10.5,0V3"></path></svg>`;
    return html`
      <button class="fold" aria-label="Einklappen">${chevron("right")}</button>
      <a class="tab" href="#">Felder</a>
      <div class="tab on">Dokumente<span class="count">3/3</span>
        <button class="step" aria-label="Vorheriges">${chevron("left", 8, 1)}</button>
        <button class="step" aria-label="Nächstes" disabled>${chevron("right", 8, 1)}</button>
        <span class="mark"></span></div>
      <a class="tab" href="#">Status</a>
      <a class="tab" href="#">Monitor</a>
      <form class="card">
        <button class="versions" type="button">Versionen</button>
        <div class="fields">
          ${this.text("author", "Autor", "oucsuperadmin")}
          ${this.text("changed", "letzte Anderung", "30.04.2026  18:57", cal)}
          ${this.text("version", "Version", "1.0")}
          <div class="field"><label class="label" for="comment">Kommentar</label>
            <div class="control area"><textarea id="comment" .value=${"Original DWG"}></textarea></div></div>
          <div class="field"><label class="label" for="kks">Objektschlüssel (KKS)</label>
            <div class="control"><input class="hit" id="kks" value="W1LCA41BR010"></div></div>
          ${this.select("group", "Objektgruppe", "Pumpe")}
          ${this.select("kind", "Dokumentenart", "Zeichnung")}
        </div>
      </form>`;
  }
}

/* ---------- page ---------- */
@customElement("app-root")
export class AppRoot extends LitElement {
  static styles = [reset, css`
    :host { display: flex; flex-direction: column; height: 100vh; min-height: 900px; background: #323232; font: 14px/20px Roboto, "Liberation Sans", sans-serif; color: #222; }
    .bar { display: grid; grid-template-columns: 626px auto 1fr; align-items: center; height: 59px; color: #c8c8c8; }
    .brand { display: flex; align-items: center; gap: 16px; padding-left: 17px; }
    .title { padding-bottom: 2px; font-size: 25px; line-height: 28px; color: #ee2a28; }
    .find { display: flex; align-items: center; }
    .combo { display: flex; align-items: center; height: 40px; width: 492px; margin: 0 20px 0 19px; border: 1px solid #bdbdbd; border-radius: 6px; background: #e0e0e0; color: #8c8c8c; }
    .scope { display: flex; align-items: center; width: 210px; height: 38px; padding: 0 8px 2px 10px; border-right: 1px solid #999; }
    .scope select { flex: 1; appearance: none; font-size: 12px; color: #555; }
    .combo input { flex: 1; min-width: 0; height: 38px; }
    .combo .lens { margin-left: 7px; }
    .combo .tune { margin-right: 11px; }
    .go { width: 20px; height: 19px; border-radius: 2px; background: #d0d0d0; color: #323232; }
    .tools { display: flex; align-items: center; justify-content: flex-end; padding-right: 9px; }
    .tools .b1 { margin-right: 22px; }
    .tools .b2 { margin-right: 19px; }
    .tools .b3 { margin-right: 25px; }
    .avatar { width: 36px; height: 36px; margin-right: 19px; border-radius: 50%; background: #f22522; color: #4a2422; font-size: 15px; font-weight: 500; }
    .body { flex: 1; display: grid; grid-template-columns: 299px 4px minmax(0, 502fr) 4px minmax(0, 869fr) 240px; min-height: 0; }
    .split { display: flex; flex-direction: column; padding-top: 475px; background: #323232; }
    .grip { height: 70px; background: #e52a28; }
    .list { display: flex; flex-direction: column; min-width: 0; overflow: hidden; background: #fff; }
    .head { height: 59px; padding: 4px 16px 0 10px; }
    .head h2 { padding-left: 1px; }
    .acts { display: flex; gap: 5px; margin-top: 5px; }
    .btn { height: 24px; gap: 6px; padding: 0 9px 0 13px; border: 1px solid #d6d6d6; border-radius: 3px; background: #f2f2f2; color: #707070; font-size: 12px; }
    .btn[disabled] { border-color: #eee; background: #fdfdfd; color: #c8c8c8; }
    .btn.sq { width: 24px; margin-left: auto; padding: 0; color: #555; }
    .btn.red { padding: 0 7px; border-color: #b80c0c; background: #b80c0c; color: #fff; }
    .rows { table-layout: fixed; width: 560px; border-collapse: collapse; font-size: 13px; border-top: 1px solid #d4d4d4; white-space: nowrap; }
    .rows th { height: 26px; padding: 0 5px; background: #f1f1f1; font-size: 12px; font-weight: 700; text-align: left; color: #111; }
    .rows td { height: 23px; padding: 0 5px; background: #fbc8ca; border-right: 1px solid #fff; color: #222; }
    .c0 { width: 26px; } .c1 { width: 226px; } .c2 { width: 111px; } .c3 { width: 109px; }
    .rows .tick { padding: 0 0 0 8px; }
    .rows input { display: block; width: 12px; height: 12px; appearance: none; border: 1px solid #dcdcdc; background: #f6f6f6; }
    .rows td input { border-color: #f5c4c6; background: none; }
    .hbar { width: 369px; height: 9px; margin-top: auto; border-radius: 4px; background: #c2c2c2; }
    .viewer { display: grid; grid-template: 60px minmax(0, 1fr) 14px / minmax(0, 1fr) 14px; min-width: 0; background: #222226; }
    .vhead { grid-column: 1 / -1; display: flex; background: #fff; border-bottom: 2px solid #323232; }
    .kind { display: flex; align-items: center; justify-content: center; width: 57px; border-right: 1px solid #d8d8d8; color: #484848; }
    .vmain { flex: 1; min-width: 0; padding: 3px 0 0 9px; }
    .vmain .acts { margin-top: 6px; }
    .vmain .name { padding-left: 1px; }
    .side { display: flex; flex-wrap: wrap; align-content: flex-start; justify-content: flex-end; gap: 2px 3px; width: 64px; padding: 4px 9px 0 0; }
    .mini { width: 24px; height: 23px; border: 1px solid #d6d6d6; border-radius: 3px; background: #f5f5f5; color: #555; }
    .mini.w { width: 26px; }
    .mini.book { width: 33px; height: 24px; color: #777; }
    .track { display: flex; align-items: center; justify-content: space-between; color: #8a8a8c; }
    .track.v { flex-direction: column; padding: 5px 0; }
    .track.h { padding: 0 4px 0 3px; }
    .thumb { border-radius: 5px; background: #77777a; }
    .v .run { flex: 1; width: 9px; padding-top: 83px; }
    .v .thumb { height: 206px; }
    .h .run { flex: 1; padding-left: 104px; }
    .h .thumb { width: 335px; height: 8px; }
  `];

  private arrow(d: string) {
    return html`<svg class="icon" width="9" height="7" viewBox="0 0 9 7" fill="currentColor" aria-hidden="true"><path d=${d}></path></svg>`;
  }

  render() {
    return html`
      <header class="bar">
        <div class="brand"><a href="#" aria-label="Start">${icon("home", 24)}</a><h1 class="title">One Unity DMS</h1></div>
        <div class="find">
          <button aria-label="Filter">${icon("collapse", 24)}</button>
          <div class="combo">
            <div class="scope"><select aria-label="Bereich"><option>aktuelle Vorgänge</option></select><span class="caret"></span></div>
            <span class="lens">${icon("search", 24)}</span>
            <input type="search" aria-label="Suche">
            <span class="tune">${icon("tune", 24)}</span>
          </div>
          <button class="go" aria-label="Suchen">${chevron("right", 7, 2)}</button>
        </div>
        <div class="tools">
          <button class="b1" aria-label="Fenster">${icon("windows", 20)}</button>
          <button class="b2" aria-label="Hochladen">${icon("cloud", 23)}</button>
          <button class="b3" aria-label="Mitteilungen">${icon("bell", 22)}</button>
          <button class="avatar">o</button>
          <button aria-label="Abmelden">${icon("exit", 22)}</button>
        </div>
      </header>
      <main class="body">
        <dms-sidebar></dms-sidebar>
        <div class="split"><span class="grip"></span></div>
        <section class="list">
          <div class="head">
            <h2>Suche nach "W1LCA41BR010" (1)</h2>
            <div class="acts">
              <button class="btn">Aktionen <span class="caret"></span></button>
              <button class="btn" disabled>Kopieren nach <span class="caret"></span></button>
              <button class="btn sq" aria-label="Aktualisieren">${icon("sync", 18)}</button>
            </div>
          </div>
          <table class="rows">
            <thead><tr><th class="c0 tick"><input type="checkbox" aria-label="Alle"></th><th class="c1">Titel</th><th class="c2">Geändert am</th><th class="c3">Letzter Bearbeiter</th><th>Angelegt am</th></tr></thead>
            <tbody><tr><td class="tick"><input type="checkbox" aria-label="Auswahl"></td><td>W1LCA41BR010 - Pumpe - Zeichnung</td><td>30.04.2026 18:57</td><td>oucsuperadmin</td><td>25.11.2025</td></tr></tbody>
          </table>
          <div class="hbar"></div>
        </section>
        <div class="split"><span class="grip"></span></div>
        <section class="viewer">
          <div class="vhead">
            <div class="kind">${icon("flash", 37)}</div>
            <div class="vmain">
              <h2 class="name">W1LCA41BR010 - Pumpe - Zeichnung</h2>
              <div class="acts"><button class="btn red">Bearbeiten</button><button class="btn">Aktionen <span class="caret"></span></button></div>
            </div>
            <div class="side">
              <button class="mini" aria-label="Favorit">${icon("starOutline", 18)}</button>
              <button class="mini w" aria-label="Teilen">${icon("share", 15)}</button>
              <button class="mini book" aria-label="Vorschau">${icon("book", 19)}</button>
            </div>
          </div>
          <cad-drawing></cad-drawing>
          <div class="track v">${this.arrow("M4.5,0L9,7H0Z")}<div class="run"><div class="thumb"></div></div>${this.arrow("M4.5,7L9,0H0Z")}</div>
          <div class="track h">${this.arrow("M1,3.5L8,0V7Z")}<div class="run"><div class="thumb"></div></div>${this.arrow("M8,3.5L1,0V7Z")}</div>
          <span></span>
        </section>
        <dms-details></dms-details>
      </main>`;
  }
}
